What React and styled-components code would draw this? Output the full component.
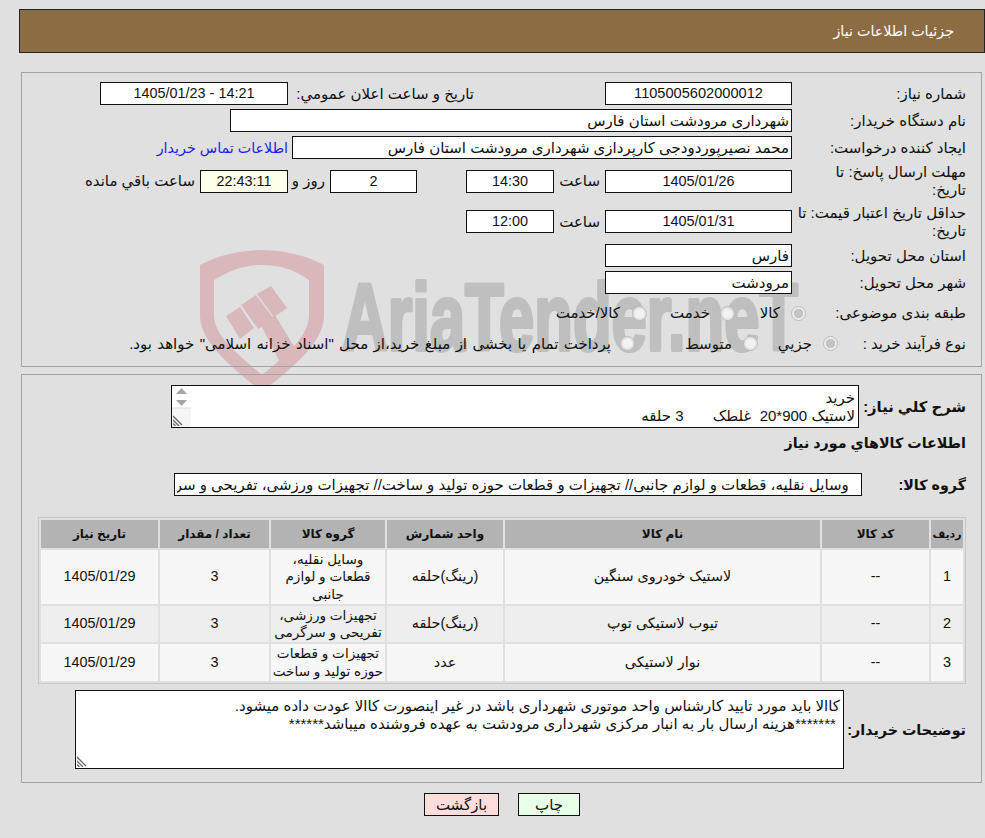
import React from "react";
import styled, { createGlobalStyle } from "styled-components";

const Global = createGlobalStyle`
  html, body {
    margin: 0;
    padding: 0;
    background: #e0e0e0;
  }
  body {
    font-family: "Liberation Sans", "DejaVu Sans", sans-serif;
    font-size: 15px;
    color: #111;
  }
`;

const Page = styled.div`
  direction: rtl;
  width: 985px;
  height: 838px;
  overflow: hidden;
  position: relative;
  padding-top: 9px;
  box-sizing: border-box;
`;
const Header = styled.div`
  position: relative;
  margin: 0 0 0 19px;
  height: 44px;
  box-sizing: border-box;
  border: 1px solid #222;
  background: #8c6c42;
  color: #fff;
  font-size: 14.3px;
  line-height: 42px;
  padding-right: 30px;
`;
const Panel = styled.div`
  position: relative;
  margin: ${p => p.$top}px 3px 0 21px;
  border: 1px solid #a3a3a3;
  box-sizing: border-box;
  height: ${p => p.$h}px;
  padding: ${p => p.$pad}px 15px 0 0;
`;
const Row = styled.div`
  display: flex;
  align-items: center;
  height: ${p => p.$h || 23}px;
  margin-bottom: 4px;
`;
const Label = styled.div`
  width: ${p => p.$w || 174}px;
  flex: none;
  line-height: 18px;
  white-space: nowrap;
`;
const Field = styled.div`
  width: ${p => p.$w}px;
  height: 23px;
  flex: none;
  box-sizing: border-box;
  border: 1px solid #111;
  background: ${p => p.$bg || "#fff"};
  line-height: 21px;
  text-align: ${p => (p.$center ? "center" : "right")};
  font-size: ${p => p.$size || 15}px;
  padding: 0 2px;
  margin-right: ${p => p.$mr || 0}px;
  white-space: nowrap;
  overflow: hidden;
`;
const Text = styled.span`
  flex: none;
  box-sizing: border-box;
  width: ${p => (p.$w ? `${p.$w}px` : "auto")};
  margin-right: ${p => p.$mr || 0}px;
  padding-right: ${p => p.$pr || 0}px;
  white-space: nowrap;
`;
const Link = styled.a`
  color: #2020f0;
  font-size: 14.3px;
  margin-right: 4px;
  text-decoration: none;
  white-space: nowrap;
`;
const Option = styled.label`
  display: flex;
  align-items: center;
  flex: none;
  gap: ${p => p.$gap || 11}px;
  width: ${p => (p.$w ? `${p.$w}px` : "auto")};
  word-spacing: ${p => p.$spread || 0}px;
  white-space: nowrap;
`;
const Radio = styled.input.attrs({ type: "radio", disabled: true })`
  appearance: none;
  width: 15px;
  height: 15px;
  flex: none;
  margin: 0;
  box-sizing: border-box;
  border-radius: 50%;
  border: 1px solid #bcbcbc;
  background: ${p =>
    p.$on
      ? "radial-gradient(circle, #c4c4c4 0 4.5px, #ececec 5px)"
      : "radial-gradient(circle, #f2f2f2 0 4.5px, #e4e4e4 5px)"};
`;

const Watermark = styled.svg`
  position: absolute;
  left: 190px;
  top: 240px;
  pointer-events: none;
`;

const NoteBox = styled.div`
  position: relative;
  flex: none;
  width: ${p => p.$w}px;
  height: ${p => p.$h}px;
`;
const Note = styled.textarea`
  display: block;
  width: 100%;
  height: 100%;
  box-sizing: border-box;
  border: 1px solid #111;
  outline: none;
  border-radius: 0;
  background: #fff;
  color: #111;
  font: 15px/18px "Liberation Sans", "DejaVu Sans", sans-serif;
  padding: ${p => p.$pt}px 3px 0;
  margin: 0;
  direction: rtl;
  resize: none;
  overflow: hidden;
`;
const Gutter = styled.svg`
  position: absolute;
  left: 1px;
  top: 1px;
`;
const Grip = styled.svg`
  position: absolute;
  left: 2px;
  bottom: 2px;
`;
const GroupInput = styled.input`
  width: 688px;
  height: 23px;
  box-sizing: border-box;
  border: 1px solid #111;
  border-radius: 0;
  outline: none;
  background: #fff;
  color: #111;
  font: 15px "Liberation Sans", "DejaVu Sans", sans-serif;
  padding: 0 8px 0 2px;
  margin: 0;
`;
const Heading = styled.div`
  font-weight: bold;
  font-size: 14.3px;
  height: 27px;
  line-height: 22px;
`;
const GroupRow = styled.div`
  display: flex;
  align-items: center;
  height: 23px;
  margin: 14px 0 21px;
`;
const BoldLabel = styled.div`
  width: ${p => p.$w}px;
  flex: none;
  font-weight: bold;
  font-size: ${p => p.$size || 14.3}px;
  white-space: nowrap;
`;
const Table = styled.table`
  width: 928px;
  margin: 0;
  box-sizing: border-box;
  border: 1px solid #c8c8c8;
  border-spacing: 2px;
  border-collapse: separate;
  table-layout: fixed;
`;
const Th = styled.th`
  background: #b3b3b3;
  height: 28px;
  padding: 0;
  font-size: ${p => p.$size || 12}px;
  white-space: nowrap;
  width: ${p => p.$w}px;
`;
const Td = styled.td`
  background: ${p => (p.$even ? "#eeeeee" : "#f7f7f7")};
  text-align: center;
  padding: 0;
  font-size: ${p => p.$size || 14.4}px;
  line-height: 17.5px;
  height: ${p => p.$h}px;
`;
const Actions = styled.div`
  position: relative;
  display: flex;
  justify-content: center;
  gap: 19px;
  margin-top: 10px;
  padding-left: 19px;
`;
const Button = styled.button`
  width: ${p => p.$w}px;
  height: 23px;
  box-sizing: border-box;
  border: 1px solid #111;
  background: ${p => p.$bg};
  color: #111;
  font: 15px "Liberation Sans", "DejaVu Sans", sans-serif;
  padding: 0;
`;

const items = [
  { no: "1", name: "لاستیک خودروی سنگین", unit: "(رینگ)حلقه", group: "وسایل نقلیه، قطعات و لوازم جانبی", h: 54 },
  { no: "2", name: "تیوب لاستیکی توپ", unit: "(رینگ)حلقه", group: "تجهیزات ورزشی، تفریحی و سرگرمی", h: 36 },
  { no: "3", name: "نوار لاستیکی", unit: "عدد", group: "تجهیزات و قطعات حوزه تولید و ساخت", h: 37 }
];

const ResizeGrip = () => (
  <Grip width="11" height="11" viewBox="0 0 11 11">
    <path d="M0 1 L9 10 M0 5 L6 11 M0 8.5 L2.5 11" stroke="#666" strokeWidth="1.3" fill="none" />
  </Grip>
);

export default function App() {
  return (
    <Page>
      <Global />
      <Watermark width="620" height="145" viewBox="190 240 620 145">
        <g fill="#d8b8ba">
          <path
            fillRule="evenodd"
            d="M200 265 C220 255 240 250 262 250 C284 250 304 255 324 265 L324 315 C324 340 300 362 262 392 C225 362 200 340 200 315 Z
               M214 280 C230 270 245 265 262 265 C280 265 295 270 309 280 L309 315 C309 335 290 352 262 375 C235 352 214 335 214 315 Z"
          />
          <path d="M226 316 L240 307 L254 328 L240 339 Z" />
          <path d="M241 305 L256 295 L274 319 L285 372 L262 327 L258 329 Z" />
          <path d="M257 294 L271 286 L287 308 L274 317 Z" />
          <path d="M263 322 L275 315 L301 358 L288 370 Z" />
        </g>
        <text
          x="342"
          y="350"
          direction="ltr"
          fontFamily="'Liberation Sans', sans-serif"
          fontWeight="bold"
          fontSize="94"
          fill="#bfbfbf"
          stroke="#bfbfbf"
          strokeWidth="4"
          strokeLinejoin="round"
          textLength="456"
          lengthAdjust="spacingAndGlyphs"
        >
          AriaTender.neT
        </text>
      </Watermark>
      <Header>جزئیات اطلاعات نیاز</Header>
      <Panel $top={19} $h={295} $pad={9}>
        <Row>
          <Label>شماره نیاز:</Label>
          <Field $w={187} $center $size={14.6}>1105005602000012</Field>
          <Text $mr={131} $w={186}>تاریخ و ساعت اعلان عمومي:</Text>
          <Field $w={188} $center $size={14.4}>14:21 - 1405/01/23</Field>
        </Row>
        <Row>
          <Label>نام دستگاه خریدار:</Label>
          <Field $w={562}>شهرداری مرودشت استان فارس</Field>
        </Row>
        <Row>
          <Label>ایجاد کننده درخواست:</Label>
          <Field $w={500}>محمد نصیرپوردودجی کارپردازی شهرداری مرودشت استان فارس</Field>
          <Link href="#">اطلاعات تماس خریدار</Link>
        </Row>
        <Row $h={36}>
          <Label>مهلت ارسال پاسخ: تا<br />تاریخ:</Label>
          <Field $w={187} $center $size={14.4}>1405/01/26</Field>
          <Text $w={51} $pr={5}>ساعت</Text>
          <Field $w={88} $center $size={14.4}>14:30</Field>
          <Field $w={87} $center $size={14.4} $mr={49}>2</Field>
          <Text $w={42} $pr={5}>روز و</Text>
          <Field $w={88} $bg="#ffffee" $center $size={14.4}>22:43:11</Field>
          <Text $pr={5}>ساعت باقي مانده</Text>
        </Row>
        <Row $h={37}>
          <Label>حداقل تاریخ اعتبار قیمت: تا<br />تاریخ:</Label>
          <Field $w={187} $center $size={14.4}>1405/01/31</Field>
          <Text $w={51} $pr={5}>ساعت</Text>
          <Field $w={88} $center $size={14.4}>12:00</Field>
        </Row>
        <Row>
          <Label>استان محل تحویل:</Label>
          <Field $w={187}>فارس</Field>
        </Row>
        <Row>
          <Label>شهر محل تحویل:</Label>
          <Field $w={187}>مرودشت</Field>
        </Row>
        <Row $h={30}>
          <Label $w={160}>طبقه بندی موضوعی:</Label>
          <Option $w={71}><Radio $on />کالا</Option>
          <Option $w={88} $gap={10}><Radio />خدمت</Option>
          <Option $gap={12}><Radio />کالا/خدمت</Option>
        </Row>
        <Row>
          <Label $w={128}>نوع فرآیند خرید :</Label>
          <Option $w={80}><Radio $on />جزيي</Option>
          <Option $w={123}><Radio />متوسط</Option>
          <Option $gap={9} $spread={1.2}><Radio />پرداخت تمام یا بخشی از مبلغ خرید،از محل "اسناد خزانه اسلامی" خواهد بود.</Option>
        </Row>
      </Panel>
      <Panel $top={7} $h={409} $pad={10}>
        <Row $h={43}>
          <BoldLabel $w={107} $size={14.8}>شرح كلي نياز:</BoldLabel>
          <NoteBox $w={688} $h={43}>
            <Note
              $pt={3}
              readOnly
              defaultValue={"خرید\nلاستیک 900*20  غلطک       3 حلقه\nتیوب لاستیکی توپ\nنوار لاستیکی"}
            />
            <Gutter width="19" height="41" viewBox="0 0 19 41">
              <rect x="0" y="22" width="19" height="19" fill="#f6f6f6" />
              <path d="M0 22 H19" stroke="#dcdcdc" />
              <path d="M9.5 2 L15 8 H4 Z M4 14 H15 L9.5 20 Z" fill="#a6a6a6" />
            </Gutter>
            <ResizeGrip />
          </NoteBox>
        </Row>
        <Heading>اطلاعات كالاهاي مورد نياز</Heading>
        <GroupRow>
          <BoldLabel $w={104}>گروه کالا:</BoldLabel>
          <GroupInput
            readOnly
            value=" وسایل نقلیه، قطعات و لوازم جانبی// تجهیزات و قطعات حوزه تولید و ساخت// تجهیزات ورزشی، تفریحی و سرگرمی"
          />
        </GroupRow>
        <Table>
          <thead>
            <tr>
              <Th $w={32} $size={11}>ردیف</Th>
              <Th $w={107}>کد کالا</Th>
              <Th $w={315}>نام کالا</Th>
              <Th $w={116}>واحد شمارش</Th>
              <Th $w={114}>گروه کالا</Th>
              <Th $w={109}>تعداد / مقدار</Th>
              <Th>تاریخ نیاز</Th>
            </tr>
          </thead>
          <tbody>
            {items.map((item, i) => (
              <tr key={item.no}>
                <Td $even={i === 1} $h={item.h}>{item.no}</Td>
                <Td $even={i === 1}>--</Td>
                <Td $even={i === 1}>{item.name}</Td>
                <Td $even={i === 1}>{item.unit}</Td>
                <Td $even={i === 1} $size={13.6}>{item.group}</Td>
                <Td $even={i === 1}>3</Td>
                <Td $even={i === 1}>1405/01/29</Td>
              </tr>
            ))}
          </tbody>
        </Table>
        <Row $h={79} style={{ marginTop: 6 }}>
          <BoldLabel $w={122}>توضیحات خریدار:</BoldLabel>
          <NoteBox $w={769} $h={79}>
            <Note
              $pt={6}
              readOnly
              defaultValue={"کاالا باید مورد تایید کارشناس واحد موتوری شهرداری باشد در غیر اینصورت کاالا عودت داده میشود.\n *******هزینه ارسال بار به انبار مرکزی شهرداری مرودشت به عهده فروشنده میباشد******"}
            />
            <ResizeGrip />
          </NoteBox>
        </Row>
      </Panel>
      <Actions>
        <Button $w={62} $bg="#e8ffe8">چاپ</Button>
        <Button $w={75} $bg="#ffdddd">بازگشت</Button>
      </Actions>
    </Page>
  );
}
